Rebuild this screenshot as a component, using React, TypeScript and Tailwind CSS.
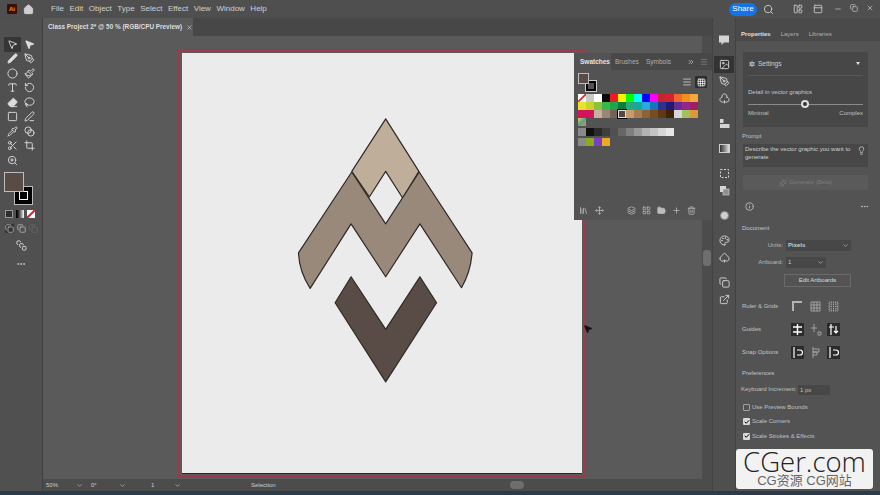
import {
  Home, Search, Minus, X, Copy, Settings, ChevronDown, Info, Lightbulb, MoreHorizontal,
  MousePointer2, Pen, PenTool, Circle, Paintbrush, Type, RotateCcw, Eraser, Lasso, Square,
  Pipette, Blend, Crop, ZoomIn, SquareStack, ChevronsRight, Menu, LayoutGrid, Grid3x3,
  Trash2, FolderOpen, Plus, Library, Move, Scissors, Check, Sparkles, LayoutPanelLeft, PanelTop,
  Layers, Club, Spade, Image, Palette, PenLine, ExternalLink,
} from 'lucide-react'

const font = { fontFamily: '"Liberation Sans", "Noto Sans CJK SC", sans-serif' }

const menu = ['File', 'Edit', 'Object', 'Type', 'Select', 'Effect', 'View', 'Window', 'Help']

const tools = [
  [MousePointer2, 'dark'], [MousePointer2, 'fill'],
  [Pen, 'fill'], [PenTool, ''],
  [Circle, ''], [Paintbrush, ''],
  [Type, ''], [RotateCcw, ''],
  [Eraser, 'fill'], [Lasso, ''],
  [Square, ''], [PenLine, ''],
  [Pipette, ''], [Blend, ''],
  [Scissors, ''], [Crop, ''],
  [ZoomIn, ''],
] as const

const row1 = ['#ffffff', '#c8c8c8', '#ffffff', '#0a0a0a', '#ed1c24', '#fff200', '#00ff00', '#00ffff', '#0000ff', '#ff00ff', '#c1272d', '#d4232f', '#ef6a2a', '#ee8f1e', '#f0a93a']
const row2 = ['#e8e02a', '#c9d32e', '#8cc13f', '#3eb54a', '#1ea64a', '#0a7e3f', '#29a878', '#17a89a', '#29a9df', '#1a75b8', '#2e3192', '#1f1a75', '#662d91', '#93278f', '#9e1f63']
const row3 = ['#d4145a', '#d4145a', '#c7b299', '#998675', '#736357', '#534741', '#c69c6d', '#a67c52', '#8c6239', '#754c24', '#603813', '#42210b', '#d8d8d8', '#a4c05a', '#d89a3a']
const row5 = ['#8a8a8a', '#111111', '#2a2a2a', '#3e3e3e', '#505050', '#666666', '#808080', '#999999', '#b3b3b3', '#c4c4c4', '#d6d6d6', '#e6e6e6']
const row6 = ['#8a8a8a', '#8cac1e', '#7b3fc4', '#f0a81e']

function SwatchRow({ colors, picked }: { colors: string[]; picked?: number }) {
  return (
    <div className="flex h-[8px]">
      {colors.map((c, i) => (
        <div
          key={i}
          className={i === picked ? 'w-[8px] h-[8px] border border-[#dddddd] outline outline-black' : 'w-[8px] h-[8px]'}
          style={{ background: c }}
        />
      ))}
    </div>
  )
}

function Swatches() {
  return (
    <div className="absolute right-0 top-[17px] w-[138px] h-[167px] bg-[#535353] flex flex-col">
      <div className="flex items-center h-[17px] bg-[#484848] text-[6.5px] text-[#aeaeae]">
        <div className="h-full w-[37px] pl-[6px] bg-[#535353] text-[#e4e4e4] font-bold flex items-center">Swatches</div>
        <div className="ml-[4px] w-[31px]">Brushes</div>
        <div>Symbols</div>
        <ChevronsRight className="ml-auto w-[8px] h-[8px] text-[#d0d0d0]" />
        <Menu className="ml-[5px] mr-[4px] w-[8px] h-[8px] text-[#8a8a8a]" />
      </div>
      <div className="flex items-start justify-between pl-[4px] pr-[5px] pt-[3px] h-[24px]">
        <div className="relative w-[18px] h-[18px]">
          <div className="absolute right-0 bottom-0 w-[10px] h-[10px] border-[2px] border-black bg-[#535353] outline outline-[#cccccc]" />
          <div className="absolute left-0 top-0 w-[11px] h-[11px] bg-[#594c47] border border-[#bdbdbd]" />
        </div>
        <div className="flex items-center gap-[3px] pt-[3px]">
          <Menu className="w-[10px] h-[10px] text-[#cfcfcf]" />
          <div className="w-[12px] h-[12px] bg-[#2d2d2d] flex items-center justify-center rounded-[1px]">
            <Grid3x3 className="w-[9px] h-[9px] text-white" />
          </div>
        </div>
      </div>
      <div className="pl-[4px] flex flex-col">
        <div className="relative">
          <SwatchRow colors={row1} />
          <svg className="absolute left-0 top-0 w-[8px] h-[8px]" viewBox="0 0 8 8">
            <path d="M0 8 L8 0" stroke="#e02020" strokeWidth="1.6" />
          </svg>
        </div>
        <SwatchRow colors={row2} />
        <SwatchRow colors={row3} picked={5} />
        <div className="w-[8px] h-[8px] bg-gradient-to-br from-[#e8c84a] via-[#4aa88a] to-[#e07a4a]" />
        <div className="mt-[2px]"><SwatchRow colors={row5} /></div>
        <div className="mt-[2px]"><SwatchRow colors={row6} /></div>
      </div>
      <div className="mt-auto h-[20px] flex items-center pl-[5px] text-[#bcbcbc]">
        <Library className="w-[9px] h-[9px]" />
        <Move className="ml-[7px] w-[9px] h-[9px]" />
        <div className="ml-[23px] flex items-center gap-[6px]">
          <Layers className="w-[9px] h-[9px]" />
          <LayoutGrid className="w-[9px] h-[9px]" />
          <FolderOpen className="w-[9px] h-[9px]" fill="#bcbcbc" />
          <Plus className="w-[9px] h-[9px]" />
          <Trash2 className="w-[9px] h-[9px]" />
        </div>
      </div>
    </div>
  )
}

function Logo() {
  return (
    <svg className="w-full h-full" viewBox="182 53 400 421">
      <g stroke="#2f2a27" strokeWidth="1.2" strokeLinejoin="round">
        <path fill="#bfae99" d="M385.7 119 L419 171.7 L402.7 198.3 L385.7 171.7 L369.3 197.3 L351.7 171.7 Z" />
        <path fill="#98897a" d="M351.7 172.3 L385.7 224.3 L419.3 172.3 L472.3 253.3 Q471 272 461.7 288.3 L420 224.3 L385.7 277.3 L351 224.3 L310 289 Q299 272 298.3 253.3 Z" />
        <path fill="#594c47" d="M351 277.3 L385.7 330 L420 277.3 L436.7 303.3 L385.7 382.7 L335 303.3 Z" />
      </g>
    </svg>
  )
}

function LeftToolbar() {
  return (
    <div className="w-[43px] h-full bg-[#505050] border-r border-[#3f3f3f] flex flex-col text-[#dcdcdc]">
      <div className="pt-[19px] pl-[4px] grid grid-cols-[17px_17px] auto-rows-[14.5px]">
        {tools.map(([Icon, mode], i) => (
          <div key={i} className={mode === 'dark' ? 'flex items-center justify-center bg-[#363636] rounded-[1px]' : 'flex items-center justify-center'}>
            <Icon className="w-[11px] h-[11px]" fill={mode === 'fill' ? '#dcdcdc' : 'none'} />
          </div>
        ))}
      </div>
      <div className="relative mt-[4px] ml-[4px] w-[32px] h-[33px]">
        <div className="absolute right-[3px] bottom-0 w-[19px] h-[19px] bg-black border border-[#bbbbbb] flex items-center justify-center">
          <div className="w-[9px] h-[9px] border border-white" />
        </div>
        <div className="absolute left-0 top-0 w-[20px] h-[20px] bg-[#594c47] border border-[#bdbdbd]" />
      </div>
      <div className="mt-[5px] ml-[5px] flex gap-[3px]">
        <div className="w-[8px] h-[8px] bg-[#2e2e2e] border border-[#999999]" />
        <div className="w-[8px] h-[8px] bg-gradient-to-r from-black to-white" />
        <div className="w-[8px] h-[8px] bg-white relative overflow-hidden">
          <svg viewBox="0 0 8 8" className="w-full h-full"><path d="M0 8 L8 0" stroke="#e02020" strokeWidth="2" /></svg>
        </div>
      </div>
      <div className="mt-[6px] ml-[5px] flex gap-[3px] text-[#bbbbbb]">
        <Copy className="w-[9px] h-[9px] bg-[#333333]" />
        <Copy className="w-[9px] h-[9px]" />
        <Copy className="w-[9px] h-[9px] text-[#6a6a6a]" />
      </div>
      <div className="mt-[7px] flex justify-center">
        <SquareStack className="w-[11px] h-[11px]" />
      </div>
      <div className="mt-[8px] flex justify-center">
        <MoreHorizontal className="w-[10px] h-[10px]" />
      </div>
    </div>
  )
}

function GradientIcon() {
  return <div className="w-[11px] h-[9px] bg-gradient-to-r from-[#333333] to-[#e0e0e0] border border-[#cfcfcf]" />
}

function DashedIcon() {
  return (
    <svg className="w-[11px] h-[11px]" viewBox="0 0 11 11" fill="none" stroke="currentColor">
      <rect x="1.5" y="1.5" width="8" height="8" strokeDasharray="2 1.5" />
    </svg>
  )
}

function OverlapIcon() {
  return (
    <svg className="w-[11px] h-[11px]" viewBox="0 0 11 11" fill="currentColor">
      <rect x="1" y="1" width="6" height="6" />
      <rect x="4" y="4" width="6" height="6" fill="#8f8f8f" stroke="currentColor" strokeWidth="0.6" />
    </svg>
  )
}

function AlignIcon() {
  return (
    <svg className="w-[11px] h-[11px]" viewBox="0 0 11 11" fill="currentColor">
      <rect x="1" y="1" width="3.5" height="4" />
      <rect x="1" y="6" width="9.5" height="4" />
    </svg>
  )
}

function BubbleIcon() {
  return (
    <svg className="w-[12px] h-[12px]" viewBox="0 0 12 12" fill="currentColor">
      <path d="M1 1.5h10v7H6L3.5 11V8.500H1z" />
    </svg>
  )
}

function DiscIcon() {
  return <div className="w-[9px] h-[9px] rounded-full bg-[#d0d0d0] border border-[#8a8a8a]" />
}

const strip = [
  [BubbleIcon],
  [Image, PenTool, Club],
  [AlignIcon],
  [GradientIcon],
  [DashedIcon, OverlapIcon],
  [DiscIcon],
  [Palette, Spade],
  [Copy, ExternalLink],
]

function IconStrip() {
  return (
    <div className="w-[24px] h-full bg-[#4f4f4f] border-x border-[#424242] flex flex-col items-center pt-[13px] gap-[8px] text-[#d4d4d4]">
      {strip.map((group, g) => (
        <div key={g} className="flex flex-col items-center">
          {group.map((Icon, i) => (
            <div key={i} className={g === 1 && i === 0 ? 'h-[17px] w-[20px] flex items-center justify-center bg-[#333333]' : 'h-[17px] w-[20px] flex items-center justify-center'}>
              <Icon className="w-[11px] h-[11px]" />
            </div>
          ))}
        </div>
      ))}
    </div>
  )
}

const glyphs = {
  ruler: <path d="M2 11V2h9" strokeWidth="2" />,
  grid: <path d="M2 2h9v9H2zM2 5h9M2 8h9M5 2v9M8 2v9" />,
  dots: <path d="M2 2h9v9H2z M4 2v9M6.500 2v9M9 2v9M2 4h9M2 6.500h9M2 9h9" strokeDasharray="1 1" />,
  guideA: <path d="M6.500 1v11M2 4h9M2 9h9" strokeWidth="1.400" />,
  guideB: <path d="M5 1v8M2 5h6M9 9h3v3H9z" />,
  guideC: <path d="M4 1v11M2 4h5M9 3v7M7 8l2 2 2-2" strokeWidth="1.200" />,
  snapA: <path d="M3 1v11M6 4h3a2 2 0 0 1 0 5H6" strokeWidth="1.200" />,
  snapB: <path d="M4 1v11M4 3h6v3H4M4 6h4v3H4" />,
}

function Toggle({ on, glyph }: { on?: boolean; glyph: keyof typeof glyphs }) {
  return (
    <div className={on ? 'w-[13px] h-[13px] bg-[#2b2b2b] flex items-center justify-center text-white' : 'w-[13px] h-[13px] flex items-center justify-center text-[#b4b4b4]'}>
      <svg className="w-[13px] h-[13px]" viewBox="0 0 13 13" fill="none" stroke="currentColor" strokeWidth="0.8">
        {glyphs[glyph]}
      </svg>
    </div>
  )
}

type Tog = { glyph: keyof typeof glyphs; on?: boolean }

function PropRow({ label, items }: { label: string; items: Tog[] }) {
  return (
    <div className="flex items-center h-[13px] pl-[6px]">
      <div className="w-[49px] text-[#c4c4c4]">{label}</div>
      <div className="flex gap-[5px]">
        {items.map((t, i) => <Toggle key={i} on={t.on} glyph={t.glyph} />)}
      </div>
    </div>
  )
}

function CheckRow({ label, on }: { label: string; on?: boolean }) {
  return (
    <div className="flex items-center h-[14.5px] pl-[7px] gap-[2px] text-[#c0c0c0]">
      {on ? (
        <div className="w-[7px] h-[7px] bg-[#d8d8d8] flex items-center justify-center rounded-[1px]">
          <Check className="w-[6px] h-[6px] text-black" strokeWidth={4} />
        </div>
      ) : (
        <div className="w-[7px] h-[7px] border border-[#a0a0a0] rounded-[1px]" />
      )}
      <span>{label}</span>
    </div>
  )
}

function Properties() {
  return (
    <div className="relative w-[144px] h-full bg-[#535353] flex flex-col text-[6px] text-[#cccccc]">
      <div className="flex items-center h-[23px] pt-[10px] pl-[5px] gap-[10px] text-[#b0b0b0] bg-[#4a4a4a]">
        <span className="font-bold text-[#e0e0e0]">Properties</span>
        <span>Layers</span>
        <span>Libraries</span>
      </div>
      <div className="mt-[11px] ml-[7px] w-[125px] h-[75px] bg-[#474747] flex flex-col px-[5px]">
        <div className="flex items-center h-[24px] gap-[2px] border-b border-[#555555] text-[#d0d0d0]">
          <Settings className="w-[8px] h-[8px]" fill="#d0d0d0" stroke="#474747" />
          <span className="text-[6.5px]">Settings</span>
          <div className="ml-auto mr-[3px] w-0 h-0 border-x-[2.5px] border-x-transparent border-t-[3px] border-t-[#e0e0e0]" />
        </div>
        <div className="mt-[12px] text-[#c8c8c8]">Detail in vector graphics</div>
        <div className="mt-[3px] relative h-[8px] flex items-center">
          <div className="w-full h-[1px] bg-[#8a8a8a]" />
          <div className="absolute left-[53px] w-[8px] h-[8px] rounded-full bg-[#333333] border-2 border-[#e0e0e0]" />
        </div>
        <div className="mt-[1px] flex justify-between text-[#c0c0c0]">
          <span>Minimal</span>
          <span>Complex</span>
        </div>
      </div>
      <div className="mt-[5px] pl-[6px] h-[9px] leading-[9px] text-[#c4c4c4]">Prompt</div>
      <div className="mt-[3px] ml-[7px] w-[125px] h-[23px] bg-[#474747] pl-[2px] pt-[1px] leading-[8px] flex text-[#d0d0d0]">
        <span className="w-[108px]">Describe the vector graphic you want to generate</span>
        <Lightbulb className="ml-[4px] mt-[1px] w-[9px] h-[9px]" />
      </div>
      <div className="mt-[8px] ml-[7px] w-[125px] h-[15px] bg-[#5a5a5a] flex items-center justify-center gap-[2px] text-[#7c7c7c]">
        <Sparkles className="w-[8px] h-[8px]" />
        <span>Generate (Beta)</span>
      </div>
      <div className="mt-[10px] h-[12px] flex items-center justify-between pl-[9px] pr-[11px]">
        <Info className="w-[9px] h-[9px]" />
        <MoreHorizontal className="w-[9px] h-[9px]" />
      </div>
      <div className="mt-[12px] pl-[6px] h-[9px] leading-[9px] text-[#c4c4c4]">Document</div>
      <div className="mt-[6px] h-[13px] flex items-center">
        <span className="w-[47px] text-right text-[#b8b8b8]">Units:</span>
        <div className="ml-[3px] w-[65px] h-[11px] bg-[#474747] flex items-center justify-between px-[2px] font-bold">
          Pixels <ChevronDown className="w-[7px] h-[7px]" />
        </div>
      </div>
      <div className="mt-[4px] h-[13px] flex items-center">
        <span className="w-[47px] text-right text-[#b8b8b8]">Artboard:</span>
        <div className="ml-[3px] w-[40px] h-[11px] bg-[#474747] flex items-center justify-between px-[2px]">
          1 <ChevronDown className="w-[7px] h-[7px]" />
        </div>
      </div>
      <div className="mt-[5px] ml-[48px] w-[67px] h-[13px] border border-[#6a6a6a] flex items-center justify-center text-[#dddddd]">
        Edit Artboards
      </div>
      <div className="mt-[13px] flex flex-col gap-[10px]">
        <PropRow label="Ruler & Grids" items={[{ glyph: 'ruler' }, { glyph: 'grid' }, { glyph: 'dots' }]} />
        <PropRow label="Guides" items={[{ glyph: 'guideA', on: true }, { glyph: 'guideB' }, { glyph: 'guideC', on: true }]} />
        <PropRow label="Snap Options" items={[{ glyph: 'snapA', on: true }, { glyph: 'snapB' }, { glyph: 'snapA', on: true }]} />
      </div>
      <div className="mt-[10px] pl-[6px] h-[9px] leading-[9px] text-[#c4c4c4]">Preferences</div>
      <div className="mt-[6px] h-[11px] flex items-center pl-[5px] text-[#c0c0c0]">
        <span className="w-[57px] whitespace-nowrap">Keyboard Increment:</span>
        <div className="w-[32px] h-[10px] bg-[#474747] px-[2px] leading-[10px]">1 px</div>
      </div>
      <div className="mt-[5px] flex flex-col">
        <CheckRow label="Use Preview Bounds" />
        <CheckRow label="Scale Corners" on />
        <CheckRow label="Scale Strokes & Effects" on />
      </div>
      <div className="absolute left-0 top-[431px] w-[137px] h-[40px] bg-[#f2f2f2] rounded-[3px] flex flex-col items-center pt-[2px]">
        <div className="text-[27.5px] leading-[22px] text-[#222222]" style={{ fontFamily: '"Open Sans", sans-serif', fontWeight: 300 }}>CGer.com</div>
        <div className="mt-[1px] text-[13px] leading-[14px] text-[#666666]">CG资源 CG网站</div>
      </div>
    </div>
  )
}

export default function App() {
  return (
    <div className="w-[880px] h-[495px] overflow-hidden flex flex-col bg-[#535353]" style={font}>
      <div className="h-[18px] bg-[#4f4f4f] flex items-center text-[8px] text-[#cfcfcf]">
        <div className="ml-[7px] w-[10px] h-[10px] bg-[#3a1005] text-[#ff9a00] text-[6px] font-bold flex items-center justify-center rounded-[1px]">Ai</div>
        <Home className="ml-[6px] w-[11px] h-[11px]" fill="#cfcfcf" />
        <div className="ml-[17px] flex gap-[5.5px]">
          {menu.map(m => <span key={m}>{m}</span>)}
        </div>
        <div className="ml-auto w-[28px] h-[13px] rounded-full bg-[#1473e6] text-white flex items-center justify-center">Share</div>
        <Search className="ml-[6px] w-[11px] h-[11px]" />
        <LayoutPanelLeft className="ml-[19px] w-[10px] h-[10px]" />
        <PanelTop className="ml-[10px] w-[10px] h-[10px]" />
        <Minus className="ml-[11px] w-[8px] h-[8px]" />
        <Copy className="ml-[8px] w-[8px] h-[8px] mb-[3px]" />
        <X className="ml-[8px] mr-[6px] w-[8px] h-[8px] mb-[3px]" />
      </div>
      <div className="flex h-[473px]">
        <LeftToolbar />
        <div className="w-[669px] h-full flex flex-col">
          <div className="h-[18px] bg-[#474747] flex">
            <div className="w-[150px] h-full bg-[#5a5a5a] flex items-center pl-[5px] text-[6.4px] font-bold text-[#dedede] whitespace-nowrap">
              Class Project 2* @ 50 % (RGB/CPU Preview)
              <X className="ml-[4px] w-[7px] h-[7px]" />
            </div>
          </div>
          <div className="relative flex-1 flex bg-[#5a5a5a]">
            <div className="absolute left-[135px] top-[13px] w-[408px] h-[429px] border-2 border-[#9c3a48] p-[2px]">
              <div className="w-full h-full bg-[#ebebeb] border-b border-[#2a2a2a]">
                <Logo />
              </div>
            </div>
            <div className="ml-auto w-[10px] h-full bg-[#4c4c4c] flex flex-col items-center pt-[214px]">
              <div className="w-[8px] h-[16px] rounded-[3px] bg-[#6e6e6e]" />
            </div>
            <Swatches />
            <div className="absolute left-[540px] top-[288px]">
              <MousePointer2 className="w-[10px] h-[10px] text-[#111111]" fill="#111111" />
            </div>
          </div>
          <div className="h-[12px] bg-[#4c4c4c] flex items-center text-[6px] text-[#cccccc]">
            <span className="ml-[3px] w-[30px]">50%</span>
            <ChevronDown className="w-[7px] h-[7px]" />
            <span className="ml-[8px] w-[28px]">0°</span>
            <ChevronDown className="w-[7px] h-[7px]" />
            <span className="ml-[25px] w-[23px]">1</span>
            <ChevronDown className="w-[7px] h-[7px]" />
            <span className="ml-[70px]">Selection</span>
            <div className="ml-auto mr-[188px] w-[14px] h-[8px] rounded-full bg-[#6e6e6e]" />
          </div>
        </div>
        <IconStrip />
        <Properties />
      </div>
      <div className="h-[4px] bg-[#2b3b4b]" />
    </div>
  )
}
